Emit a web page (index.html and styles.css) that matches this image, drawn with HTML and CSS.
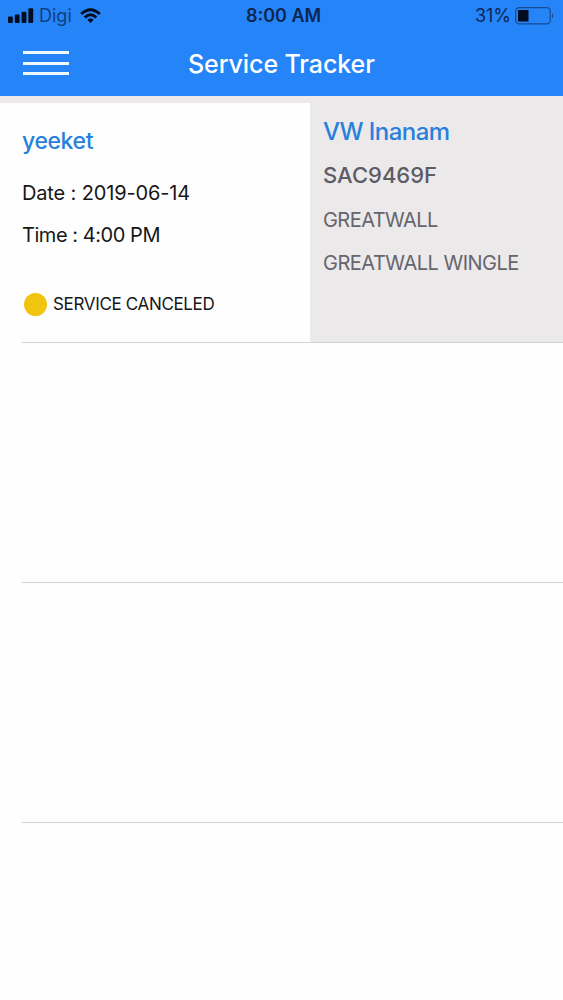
FILE: index.html
```html
<!DOCTYPE html>
<html lang="en">
<head>
<meta charset="utf-8">
<title>Service Tracker</title>
<link rel="stylesheet" href="styles.css">
</head>
<body>
<header class="header">
  <div class="status">
    <div class="carrier">
      <svg class="signal" width="26" height="16" viewBox="0 0 26 16"><rect x="0" y="8.5" width="4.8" height="6.5" rx="1"/><rect x="6.8" y="6.5" width="4.8" height="8.5" rx="1"/><rect x="13.6" y="3.8" width="4.8" height="11.2" rx="1"/><rect x="20.4" y="0.3" width="4.8" height="14.7" rx="1"/></svg>
      <span class="carrier-name">Digi</span>
      <svg class="wifi" width="21" height="15" viewBox="0 0 22 16"><path d="M0 5.2Q11-4.8 22 5.2L19.8 7.4Q11-.6 2.2 7.4Z"/><path d="M3.8 9Q11 2.4 18.2 9L16 11.2Q11 6.6 6 11.2Z"/><path d="M7.6 12.6Q11 9.6 14.4 12.6L11 16Z"/></svg>
    </div>
    <div class="clock">8:00 AM</div>
    <div class="power">
      <span>31%</span>
      <svg class="battery" width="40" height="18" viewBox="0 0 40 18"><rect x=".7" y=".7" width="34.6" height="16.2" rx="3.6" fill="none" stroke="#164a91" stroke-width="1.2"/><rect x="3" y="3" width="10.5" height="11.6" rx=".6"/><path class="cap" d="M37 6Q39.5 8.8 37 11.6Z"/></svg>
    </div>
  </div>
  <div class="nav">
    <div class="menu"><i></i><i></i><i></i></div>
    <h1 class="title">Service Tracker</h1>
  </div>
</header>
<main class="list">
  <section class="row booking">
    <div class="details">
      <div class="name">yeeket</div>
      <div class="date">Date : 2019-06-14</div>
      <div class="time">Time : 4:00 PM</div>
      <div class="state"><i class="dot"></i><span class="state-text">SERVICE CANCELED</span></div>
    </div>
    <div class="vehicle">
      <div class="branch">VW Inanam</div>
      <div class="plate">SAC9469F</div>
      <div class="make">GREATWALL</div>
      <div class="model">GREATWALL WINGLE</div>
    </div>
  </section>
  <section class="row"></section>
  <section class="row"></section>
</main>
</body>
</html>
```
FILE: styles.css
```css
* { box-sizing: border-box; }
body { margin: 0; background: #fefefe; font-family: Inter, "Liberation Sans", sans-serif; color: #171717; }
.header { height: 96px; background: #2584f8; color: #fff; }
.status { height: 31px; display: grid; grid-template-columns: 1fr auto 1fr; align-items: center; padding: 0 8px; color: #0d2650; font-size: 18px; }
.carrier { display: flex; align-items: center; color: #123f80; }
.carrier-name { margin: 0 8px 0 5px; }
svg { display: block; fill: #030b1e; }
.wifi { margin-top: -1px; }
.cap { fill: #164a91; }
.clock { font-weight: 600; padding-left: 4px; }
.power { display: flex; justify-content: flex-end; align-items: center; gap: 4px; }
.nav { height: 65px; display: grid; grid-template-columns: 165px 1fr 165px; align-items: center; padding: 0 23px; }
.menu { width: 46px; display: grid; gap: 7.6px; margin-top: -1px; }
.menu i { height: 3px; background: #effaff; }
.title { margin: 0; font-size: 25px; font-weight: 500; line-height: 30px; letter-spacing: -.1px; white-space: nowrap; }
.list { border-top: 7px solid #ebe9ea; }
.row { height: 240px; margin-left: 22px; border-bottom: 1px solid #d3d2d4; }
.booking { display: grid; grid-template-columns: 288px 1fr; }
.details { padding-top: 24px; font-size: 20px; line-height: 28px; }
.name { color: #2880dc; font-size: 23px; font-weight: 500; letter-spacing: -.4px; }
.date { margin-top: 24px; letter-spacing: -.15px; }
.time { margin-top: 14px; letter-spacing: -.45px; }
.state { display: flex; align-items: center; margin-top: 41px; font-size: 17px; letter-spacing: -.34px; }
.dot { width: 23px; height: 23px; border-radius: 50%; background: #f1c40f; margin: 0 6px 0 2px; }
.vehicle { background: #ebe9ea; padding: 15px 0 0 13px; color: #66646c; font-size: 20px; line-height: 28px; }
.branch { color: #2880dc; font-size: 24px; font-weight: 500; letter-spacing: -.55px; }
.plate { margin-top: 15px; font-size: 22px; font-weight: 500; color: #5d5b63; }
.make { margin-top: 17px; letter-spacing: -.55px; }
.model { margin-top: 15px; letter-spacing: -.5px; }
```
